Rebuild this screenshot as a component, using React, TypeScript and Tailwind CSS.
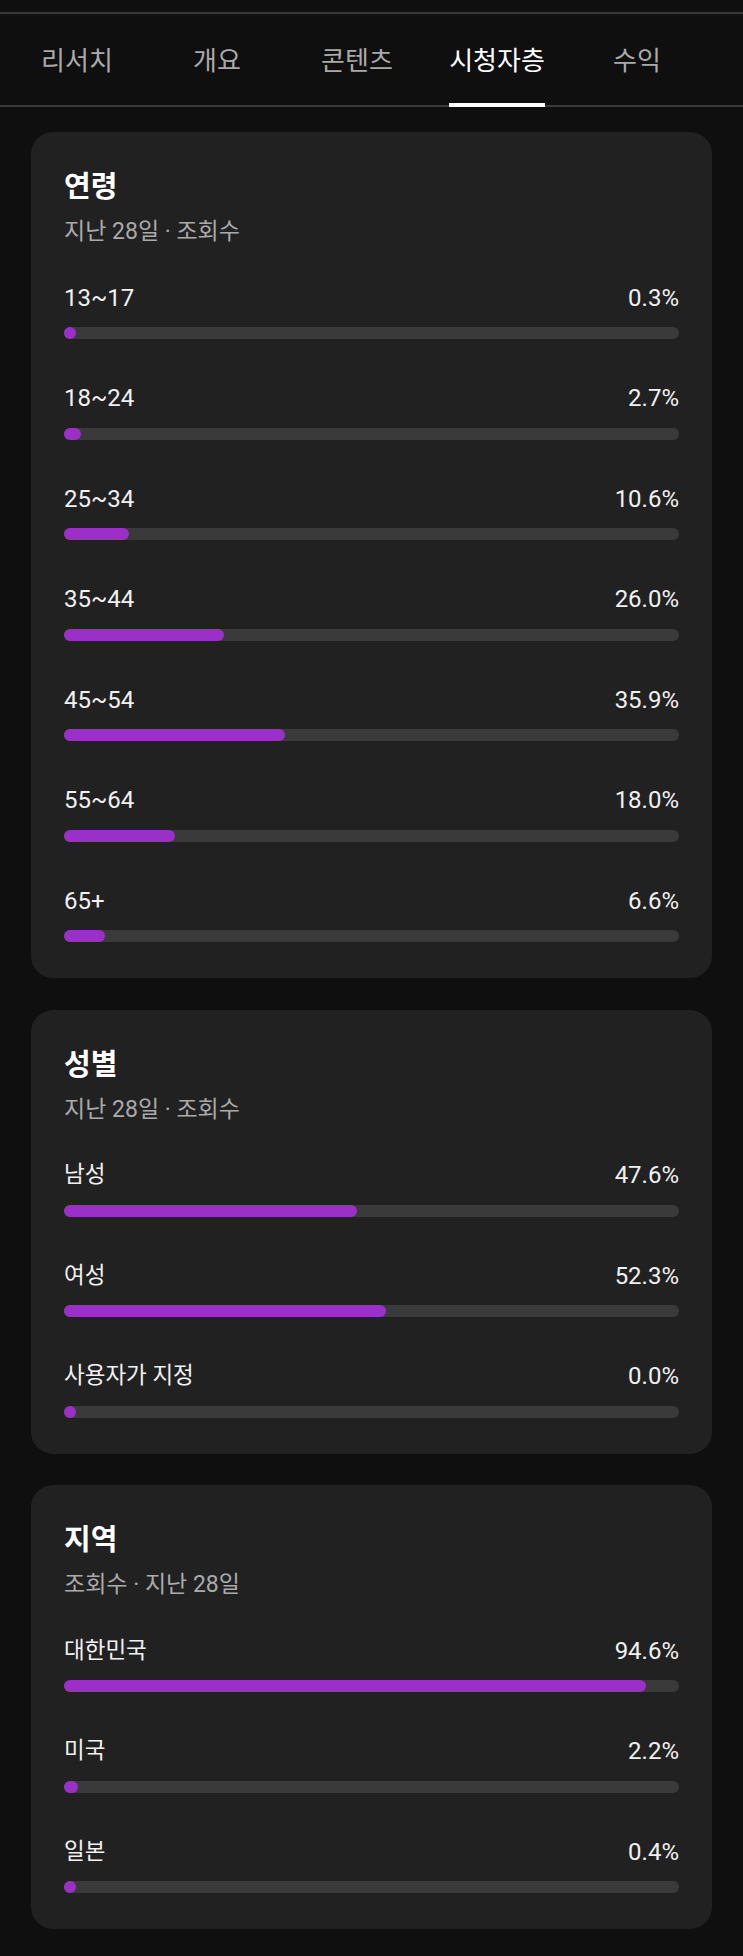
import React from "react";

type Row = { label: string; value: number; kr?: boolean };

type Section = { title: string; subtitle: string; rows: Row[] };

const tabs = ["리서치", "개요", "콘텐츠", "시청자층", "수익"];
const activeTab = "시청자층";

const sections: Section[] = [
  {
    title: "연령",
    subtitle: "지난 28일 · 조회수",
    rows: [
      { label: "13~17", value: 0.3 },
      { label: "18~24", value: 2.7 },
      { label: "25~34", value: 10.6 },
      { label: "35~44", value: 26.0 },
      { label: "45~54", value: 35.9 },
      { label: "55~64", value: 18.0 },
      { label: "65+", value: 6.6 },
    ],
  },
  {
    title: "성별",
    subtitle: "지난 28일 · 조회수",
    rows: [
      { label: "남성", value: 47.6, kr: true },
      { label: "여성", value: 52.3, kr: true },
      { label: "사용자가 지정", value: 0.0, kr: true },
    ],
  },
  {
    title: "지역",
    subtitle: "조회수 · 지난 28일",
    rows: [
      { label: "대한민국", value: 94.6, kr: true },
      { label: "미국", value: 2.2, kr: true },
      { label: "일본", value: 0.4, kr: true },
    ],
  },
];

export default function App() {
  return (
    <div
      className="min-h-[1956px] w-full bg-[#0f0f0f] text-white"
      style={{ fontFamily: "Roboto, 'Noto Sans CJK KR', sans-serif" }}
    >
      {/* 상단 탭 */}
      <div className="h-[12px]" />
      <nav className="flex h-[95px] border-y-2 border-[#3a3a3a] pl-[7px]">
        {tabs.map((tab) => {
          const active = tab === activeTab;
          return (
            <div key={tab} className="flex h-full w-[140px] justify-center">
              <span
                className={`relative h-full pt-[31px] text-[26px] leading-[32px] ${
                  active ? "text-white" : "text-[#aaaaaa]"
                }`}
              >
                {tab}
                {active && (
                  <span className="absolute bottom-[-2px] left-0 right-0 h-[4px] bg-white" />
                )}
              </span>
            </div>
          );
        })}
      </nav>

      {/* 카드 목록 */}
      <main className="flex flex-col gap-[31.5px] px-[31px] pt-[25px] pb-[26px]">
        {sections.map((s) => (
          <StatCard key={s.title} section={s} />
        ))}
      </main>
    </div>
  );
}

function StatCard({ section }: { section: Section }) {
  return (
    <section className="rounded-[22px] bg-[#212121] px-[33px] pt-[37px] pb-[36px]">
      <h2 className="text-[29px] font-bold leading-[36px] text-white">
        {section.title}
      </h2>
      <p className="mt-[13px] text-[23px] leading-[28px] text-[#aaaaaa]">
        {section.subtitle}
      </p>
      <div className="mt-[36.5px] flex flex-col gap-[44px]">
        {section.rows.map((r) => (
          <BarRow key={r.label} row={r} />
        ))}
      </div>
    </section>
  );
}

function BarRow({ row }: { row: Row }) {
  return (
    <div>
      <div className="flex h-[30px] items-center justify-between text-[#f1f1f1]">
        <span className={row.kr ? "text-[22.5px]" : "text-[24px]"}>{row.label}</span>
        <span className="text-[24px]">{row.value.toFixed(1)}%</span>
      </div>
      <div className="mt-[14.5px] h-[12px] w-full rounded-full bg-[#3a3a3a]">
        <div
          className="h-full min-w-[12px] rounded-full bg-[#9b30c8]"
          style={{ width: `${row.value}%` }}
        />
      </div>
    </div>
  );
}
